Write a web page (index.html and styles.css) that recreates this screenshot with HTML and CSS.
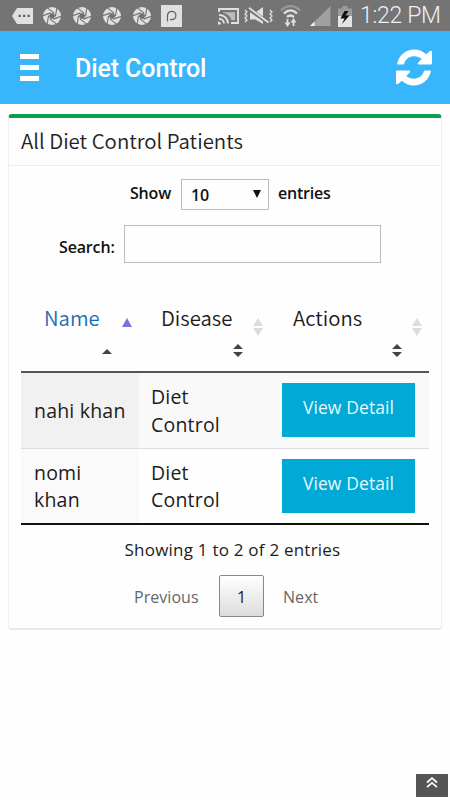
FILE: index.html
```html
<!DOCTYPE html>
<html lang="en">
<head>
<meta charset="utf-8">
<title>Diet Control</title>
<link rel="stylesheet" href="styles.css">
</head>
<body>
<svg class="defs" aria-hidden="true">
  <symbol id="aperture" viewBox="0 0 18 18">
    <circle cx="9" cy="9" r="9" fill="#e0e0e0"/>
    <g stroke="#707070" stroke-width="1.1">
      <path id="blade" d="M4.500 .8L11 6.200"/>
      <use href="#blade" transform="rotate(60 9 9)"/>
      <use href="#blade" transform="rotate(120 9 9)"/>
      <use href="#blade" transform="rotate(180 9 9)"/>
      <use href="#blade" transform="rotate(240 9 9)"/>
      <use href="#blade" transform="rotate(300 9 9)"/>
    </g>
    <path d="M7.5 6.2h3.3L12.2 9l-1.5 2.8H7.4L5.8 9z" fill="#707070"/>
  </symbol>
  <symbol id="sort-both" viewBox="0 0 10 18">
    <path d="M5 0l5 8H0zM5 18L0 10h10z"/>
  </symbol>
  <symbol id="carets" viewBox="0 0 10 13">
    <path d="M5 0l5 5H0zM5 13L0 8h10z"/>
  </symbol>
</svg>

<div class="status">
  <div class="notes">
    <svg class="message" width="21" height="16" viewBox="0 0 21 16"><path d="M5 0h16v16H5L0 8z" fill="#e0e0e0"/><path d="M6.5 6.7h2.3v2.3H6.5zM11 6.7h2.3v2.3H11zM15.5 6.7h2.3v2.3h-2.3z" fill="#606060"/></svg>
    <svg width="18" height="18"><use href="#aperture"/></svg>
    <svg width="18" height="18"><use href="#aperture"/></svg>
    <svg width="18" height="18"><use href="#aperture"/></svg>
    <svg width="18" height="18"><use href="#aperture"/></svg>
    <svg class="pico" width="21" height="22" viewBox="0 0 21 22"><path d="M0 0h21v22H0z" fill="#e0e0e0"/><path d="M6.5 16.5V10.5a4.2 4.2 0 1 1 4.2 4.2H9" fill="none" stroke="#606060" stroke-width="1.2"/></svg>
  </div>
  <div class="signals">
    <svg class="cast" width="22" height="17" viewBox="0 0 22 17" fill="none" stroke="#e0e0e0" stroke-width="1.9"><path d="M1 4V1h19v14h-7M1 7a8.5 8.5 0 0 1 9 8.5M1 10.7a5 5 0 0 1 5 4.8"/><path d="M5 4.2h12v8h-3.5C12.500 8.500 9 5.500 5 5z" fill="#bdbdbd" stroke="none"/><path d="M0 13.500a3 3 0 0 1 3 3H0z" fill="#e0e0e0" stroke="none"/></svg>
    <svg class="mute" width="30" height="18" viewBox="0 0 30 18"><path d="M6 5.500h5.500L19 0v17l-7.500-4.500H6z" fill="#e0e0e0"/><path d="M4.500 1.500L24.500 16" stroke="#747474" stroke-width="4"/><path d="M5 .8L24.500 15.500" stroke="#e0e0e0" stroke-width="1.8"/><path d="M1 3l2 2-2 2 2 2-2 2 2 2-2 2M26 3l2 2-2 2 2 2-2 2 2 2-2 2" fill="none" stroke="#e0e0e0" stroke-width="1.3"/></svg>
    <svg class="wifi" width="21" height="22" viewBox="0 0 21 22" fill="none" stroke="#e0e0e0" stroke-width="2.300"><path d="M1 5.500C6.500-.3 14.500-.3 20 5.500" stroke="#999"/><path d="M4 8.500c4-4 9-4 13 0M7 12c2.400-2 4.600-2 7 0"/><path d="M7.500 14v5M13.500 21v-5" stroke-width="1.800"/><path d="M4.500 17.500h6l-3 4.500zM10.500 17.500l3-4.500 3 4.500z" fill="#e0e0e0" stroke="none"/></svg>
    <svg class="cell" width="21" height="20" viewBox="0 0 21 20"><path d="M20.500 0v20H0z" fill="#a0a0a0"/><path d="M4.500 15.500V20H0z" fill="#f0f0f0"/></svg>
    <svg class="battery" width="14" height="21" viewBox="0 0 14 21"><path d="M4.500 0h5v2.500H14V10H0V2.500h4.500z" fill="#9c9c9c"/><path d="M0 10h14v11H0z" fill="#e4e4e4"/><path d="M6.500 5L2.500 12.500h4L4 18l7.500-8.500h-4l3-4.500z" fill="#111"/></svg>
    <span class="time">1:22 PM</span>
  </div>
</div>

<header class="appbar">
  <div class="menu"><i></i><i></i><i></i></div>
  <h1>Diet Control</h1>
  <svg class="refresh" width="36" height="37" viewBox="0 0 36 37" fill="#fff"><path d="M1 15C3 5.500 10.500.5 18 .5c5 0 9 1.700 12.200 4.700L34 2q2-1 2 1v11.500q0 1-1 1H23q-2-.3-.8-2l3.500-3.500C20 5.400 12 7 9 12.500c-.6 1.100-.8 3-2 3H2q-1 0-1-.5z"/><path d="M35 22c-2 9.500-9.500 14.500-17 14.500-5 0-9-1.700-12.200-4.700L2 35q-2 1-2-1V22.500q0-1 1-1h12q2 .3.8 2L10.300 27C16 31.600 24 30 27 24.500c.6-1.100.8-3 2-3h5q1 0 1 .5z"/></svg>
</header>

<main class="card">
  <h2><span>All Diet Control Patients</span></h2>
  <div class="length">
    <span class="show">Show</span>
    <div class="select"><span>10</span><svg width="8" height="8" viewBox="0 0 8 8"><path d="M0 0h8L4 8z" fill="#111"/></svg></div>
    <span class="entries">entries</span>
  </div>
  <div class="filter"><label for="q">Search:</label><input id="q" type="text"></div>

  <table>
    <colgroup><col class="c1"><col class="c2"><col class="c3"></colgroup>
    <thead>
      <tr>
        <th class="sorted"><span class="name">Name</span>
          <svg class="up" width="10" height="9" viewBox="0 0 10 9"><path d="M5 0l5 9H0z"/></svg>
          <svg class="caret" width="10" height="5" viewBox="0 0 10 5"><path d="M5 0l5 5H0z"/></svg></th>
        <th><span class="disease">Disease</span>
          <svg class="both" width="10" height="18"><use href="#sort-both"/></svg>
          <svg class="carets" width="10" height="13"><use href="#carets"/></svg></th>
        <th><span class="actions">Actions</span>
          <svg class="both" width="10" height="18"><use href="#sort-both"/></svg>
          <svg class="carets" width="10" height="13"><use href="#carets"/></svg></th>
      </tr>
    </thead>
    <tbody>
      <tr class="odd"><td>nahi khan</td><td>Diet<br>Control</td><td><a class="btn">View Detail</a></td></tr>
      <tr class="even"><td>nomi<br>khan</td><td>Diet<br>Control</td><td><a class="btn">View Detail</a></td></tr>
    </tbody>
  </table>

  <p class="info">Showing 1 to 2 of 2 entries</p>
  <nav class="pages"><a>Previous</a><a class="current">1</a><a>Next</a></nav>
</main>

<a class="totop"><svg width="12" height="11" viewBox="0 0 12 11" fill="none" stroke="#fff" stroke-width="1.700"><path d="M1 5.500l5-4.300 5 4.300M1 10.200l5-4.300 5 4.300"/></svg></a>
</body>
</html>
```

FILE: styles.css
```css
* { box-sizing: border-box; }
body {
  margin: 0;
  height: 800px;
  overflow: hidden;
  background: #fefefe;
  color: #1c1c1c;
  font-family: "Open Sans", sans-serif;
}
svg { display: block; flex: none; }
.defs { position: absolute; width: 0; height: 0; }

.status {
  display: flex;
  justify-content: space-between;
  height: 31px;
  padding: 0 10px 0 12px;
  background: #747474;
}
.notes { display: flex; align-items: center; gap: 12px; height: 32px; }
.notes .message { margin-right: -2px; }
.notes .pico { margin-left: -2px; }
.signals { display: flex; align-items: center; height: 32px; }
.mute { margin-left: 4px; }
.wifi { margin-left: 6px; }
.cell { margin-left: 9px; }
.battery { margin-left: 7px; }
.time {
  width: 80px;
  margin-left: 8px;
  font: 300 23px/36px Roboto, sans-serif;
  letter-spacing: -.3px;
  color: #f0f0f0;
  white-space: nowrap;
}

.appbar {
  display: flex;
  align-items: center;
  height: 73px;
  padding: 0 18px 0 20px;
  background: #38b6fc;
}
.menu { display: flex; flex-direction: column; gap: 6px; width: 19px; }
.menu i { height: 5px; background: #fff; }
.appbar h1 {
  flex: 1;
  margin: 2px 0 0 36px;
  font: 500 25px/30px Roboto, sans-serif;
  letter-spacing: -.1px;
  color: #fff;
}

.card {
  width: 434px;
  height: 516px;
  margin: 10px 0 0 8px;
  border: 1px solid #eee;
  border-top: 4px solid #0c9f50;
  border-bottom: 2px solid #e8e8e8;
  border-radius: 4px;
  background: #fefefe;
}
.card h2 {
  height: 48px;
  margin: 0;
  padding-left: 12px;
  border-bottom: 1px solid #eee;
  color: #222;
  font: 350 20.400px/44px "Noto Sans CJK SC", sans-serif;
  white-space: nowrap;
}
.length {
  display: flex;
  align-items: center;
  height: 31px;
  margin: 13px 0 0 121px;
  font-size: 16px;
  font-weight: 600;
  letter-spacing: -.2px;
  color: #111;
}
.show { width: 51px; margin-top: -4px; }
.entries { margin: -4px 0 0 9px; }
.select {
  display: flex;
  align-items: center;
  justify-content: space-between;
  width: 88px;
  height: 31px;
  padding: 1px 7px 0 9px;
  border: 1px solid #bbb;
  background: #fefefe;
}
.select svg { margin-top: -3px; }
.filter {
  display: flex;
  align-items: center;
  height: 38px;
  margin: 15px 0 0 50px;
}
.filter label {
  width: 65px;
  padding-top: 6px;
  font-size: 16px;
  font-weight: 600;
  letter-spacing: -.15px;
  color: #111;
}
.filter input { width: 257px; height: 38px; border: 1px solid #bbb; background: #fefefe; }

table {
  width: 408px;
  margin: 37px 0 0 12px;
  border-collapse: separate;
  border-spacing: 0;
  table-layout: fixed;
}
.c1 { width: 118px; }
.c2 { width: 131px; }
.c3 { width: 159px; }
th {
  position: relative;
  height: 73px;
  padding: 2px 0 0 22px;
  border-bottom: 2px solid #555;
  font: 350 20.300px/31px "Noto Sans CJK SC", sans-serif;
  text-align: left;
  vertical-align: top;
}
.sorted { padding-left: 23px; color: #1a6db5; }
.actions { margin-left: 1px; }
th svg { position: absolute; }
.up { right: 7px; top: 18px; fill: #7676d8; }
.caret { right: 27px; top: 49px; fill: #444; }
.both { right: 7px; top: 18px; fill: #dcdcdc; }
.carets { right: 27px; top: 44px; fill: #444; }
td {
  height: 76px;
  padding: 0 12px;
  font-size: 19.500px;
  font-weight: 400;
  letter-spacing: .2px;
  line-height: 27.500px;
  vertical-align: middle;
  white-space: nowrap;
}
td:first-child { padding-left: 13px; }
.odd td { border-bottom: 1px solid #ddd; background: #f9f9f9; }
.odd td:first-child { background: #f1f1f1; }
.even td { border-bottom: 2px solid #111; }
.even td:first-child { background: #fafafa; }
.btn {
  display: block;
  width: 133px;
  height: 54px;
  margin-top: -1px;
  background: #00a9d6;
  color: #e6f8fc;
  font-size: 17.500px;
  letter-spacing: .1px;
  line-height: 49px;
  text-align: center;
}
.info {
  margin: 12px 0 0;
  padding-left: 15px;
  font-size: 17px;
  letter-spacing: .22px;
  line-height: 26px;
  text-align: center;
}
.pages {
  display: flex;
  align-items: center;
  height: 42px;
  margin: 12px 0 0 125px;
  font-size: 16px;
  letter-spacing: .05px;
  color: #666;
}
.pages a { padding-top: 1px; }
.pages a:first-child { width: 85px; }
.pages .current {
  width: 45px;
  height: 42px;
  margin-right: 19px;
  border: 1px solid #888;
  border-radius: 2px;
  background: linear-gradient(#fff, #dcdcdc);
  color: #222;
  line-height: 41px;
  text-align: center;
}
.totop {
  position: fixed;
  left: 416px;
  bottom: 3px;
  display: flex;
  justify-content: center;
  width: 32px;
  height: 23px;
  padding-top: 3px;
  background: #555;
}
```
